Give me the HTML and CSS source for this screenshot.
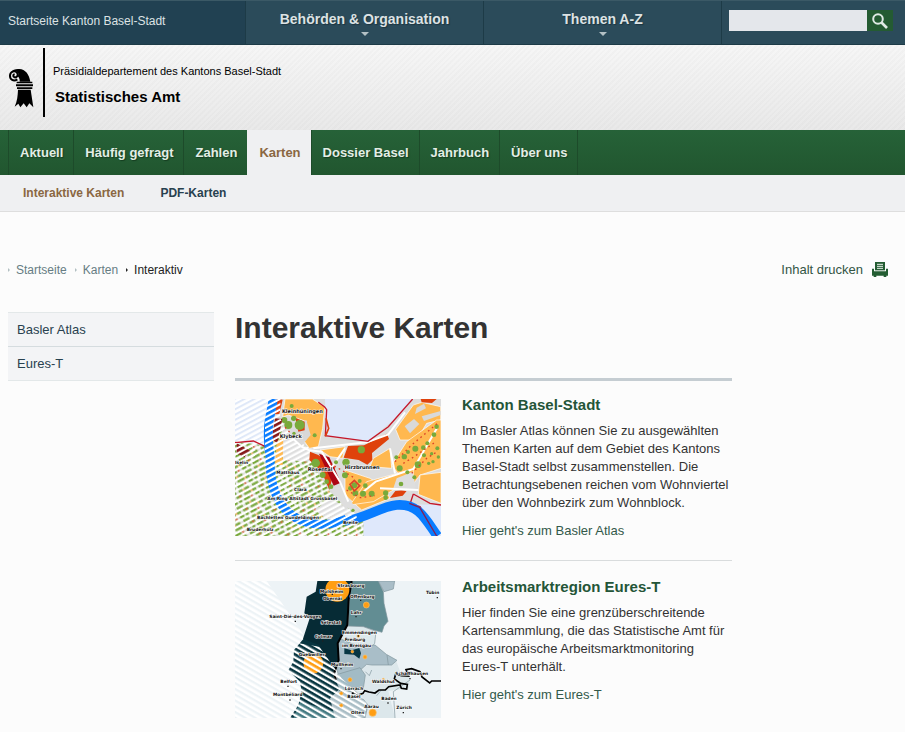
FILE: index.html
```html
<!DOCTYPE html>
<html lang="de">
<head>
<meta charset="utf-8">
<title>Interaktive Karten – Statistisches Amt</title>
<link rel="stylesheet" href="styles.css">
</head>
<body>
<div class="topbar">
  <a class="topbar-home" href="#">Startseite Kanton Basel-Stadt</a>
  <a class="topbar-menu" href="#">Behörden &amp; Organisation<span class="arrow"></span></a>
  <a class="topbar-menu" href="#">Themen A-Z<span class="arrow"></span></a>
  <form class="search">
    <input type="text" aria-label="Suche">
    <button type="button" aria-label="Suchen">
      <svg width="16" height="16" viewBox="0 0 16 16" fill="none" stroke="#dfe9e4"><circle cx="6" cy="6" r="4.8" stroke-width="2"/><path d="M9.5 9.5L15 15" stroke-width="2.6"/></svg>
    </button>
  </form>
</div>
<header class="brand">
  <svg class="logo" width="27" height="40" viewBox="0 0 81 120" aria-hidden="true">
    <path d="M35 41C36 33 32 27 29 25C35 15 27 8 18 9L8 12C15 4 24 2 34 3C52 4 63 18 67 41z" fill="#000"/>
    <path d="M28 34C17 42 5 34 6 22C7 11 20 6 27 14C33 22 25 31 18 27C14 24 16 19 20 20" fill="none" stroke="#000" stroke-width="6"/>
    <path d="M26 41H73V46H26zM24 49H75V55H24zM27 58H73V63H27z" fill="#000"/>
    <path d="M30 65H68L76 118L64 106L56 118L47 106L37 118L31 107L20 116C28 99 29 83 30 65z" fill="#000"/>
  </svg>
  <div class="brand-text">
    <div class="department">Präsidialdepartement des Kantons Basel-Stadt</div>
    <div class="office">Statistisches Amt</div>
  </div>
</header>
<nav class="mainnav">
  <a href="#">Aktuell</a><a href="#">Häufig gefragt</a><a href="#">Zahlen</a><a class="active" href="#">Karten</a><a href="#">Dossier Basel</a><a href="#">Jahrbuch</a><a href="#">Über uns</a>
</nav>
<nav class="subnav">
  <a class="active" href="#">Interaktive Karten</a><a href="#">PDF-Karten</a>
</nav>
<div class="pathbar">
  <nav class="crumbs"><a href="#">Startseite</a><a href="#">Karten</a><span>Interaktiv</span></nav>
  <a class="print" href="#">Inhalt drucken
    <svg width="16" height="15" viewBox="0 0 48 45"><path d="M9 0H39V25H9z" fill="#245d33"/><path d="M15 7H33M15 13H33M15 19H33" stroke="#e8f0ea" stroke-width="3"/><path d="M0 20H6V28H42V20H48V41H43V45H35V41H13V45H5V41H0z" fill="#245d33"/></svg>
  </a>
</div>
<div class="layout">
  <nav class="sidenav"><a href="#">Basler Atlas</a><a href="#">Eures-T</a></nav>
  <main>
    <h1>Interaktive Karten</h1>
    <article class="teaser">
      <svg class="map" viewBox="15 12 618 411" role="img" aria-label="Karte Kanton Basel-Stadt">
        <defs>
          <pattern id="sky" width="40" height="14" patternUnits="userSpaceOnUse" patternTransform="rotate(-28)"><rect width="40" height="14" fill="#fff"/><rect width="40" height="6" fill="#dfe8f8"/></pattern>
          <pattern id="town" width="74" height="42" patternUnits="userSpaceOnUse" patternTransform="rotate(-28)"><rect width="74" height="42" fill="#fff"/><path d="M0 3H74M0 17H74M0 31H74" stroke="#dedfdb" stroke-width="6"/><path d="M2 3h14M22 3h9M38 3h20M6 17h20M35 17h12M54 17h15M0 31h12M20 31h18M46 31h22" stroke="#78a83b" stroke-width="7"/><path d="M61 3h6M29 31h5" stroke="#d9562b" stroke-width="5"/><path d="M48 17h5M69 31h5" stroke="#f1b35c" stroke-width="6"/></pattern>
          <pattern id="plain" width="40" height="14" patternUnits="userSpaceOnUse" patternTransform="rotate(-28)"><rect width="40" height="14" fill="#fff"/><rect width="40" height="7" fill="#dedede"/></pattern>
          <pattern id="cut" width="40" height="14" patternUnits="userSpaceOnUse" patternTransform="rotate(-28)"><rect y="8" width="40" height="6" fill="#fff"/></pattern>
          <clipPath id="west"><path d="M0 0H152L150 70L190 130L250 190L300 290L355 340L392 375V440H0z"/></clipPath>
        </defs>
        <rect x="15" y="12" width="618" height="411" fill="#dfe8fb"/>
        <path d="M150 12H285L287 122L414 139L520 50L548 12H633V330L545 328L480 325L400 375V423H130V60z" fill="#dcdcdc"/>
        <path d="M15 12H140L110 150L15 145z" fill="url(#sky)"/>
        <path d="M15 140L110 152L150 75L190 130L238 160L245 205L300 290L355 340L400 375V423H15z" fill="url(#town)"/>
        <path d="M158 85L190 130L238 160L243 200L160 195L150 140zM300 310L355 340L390 375L300 380L255 345z" fill="url(#plain)"/>
        <g fill="#ffb84f" stroke="#fff" stroke-width="2">
          <path d="M165 12H247L284 36L278 100L265 155L238 160L220 135L230 80L175 60L158 66z"/>
          <path d="M270 165L345 155L338 190L300 185z"/><path d="M497 103L550 30L575 22L632 35V75L590 85L560 135L510 135z"/>
          <path d="M430 190L480 160L485 220L420 215z"/><path d="M485 210L530 140L620 75H633V220L570 240L540 280L500 230z"/>
          <path d="M345 225L420 250L460 275L480 310L395 345L345 300z"/><path d="M410 260L550 222V250L430 320L360 330z"/>
          <path d="M570 240L633 232V325L565 298z"/>
        </g>
        <path d="M140 145L160 120L158 210H135z" fill="#ffb84f"/>
        <g fill="#d9d9d9"><path d="M524 94L552 72L568 87L540 115z"/><path d="M575 64L632 48V60L582 78z"/><path d="M560 38L582 26L588 40L555 57z"/></g>
        <path d="M205 88L229 75L242 120L212 155L190 130z" fill="#d8d8d8"/>
        <path d="M140 12L158 14L148 57L135 58zM196 68L224 80V106L205 110z" fill="#dc3f10"/>
        <path d="M341 188L354 153L402 151L471 116L477 132L426 174L427 195L412 209L386 195z" fill="#df420c"/>
        <path d="M572 12H620L606 24L575 22zM240 170L265 180L315 216L298 285L275 230L238 195zM480 309L496 288L533 284L518 302z" fill="#df420c"/>
        <path d="M267 176L298 187L333 263L311 272z" fill="#ad0513"/>
        <path d="M300 282L330 275L375 335L345 340zM500 250L548 230L557 275L544 292L490 280z" fill="#dedede"/>
        <g fill="none" stroke="#fff" stroke-width="6"><path d="M190 132L215 155L238 166L275 170L330 260L355 320M250 160L410 142L475 118L525 52M400 290L437 260L550 222L625 92M345 160L300 225M450 280L565 285M480 160L495 235"/></g>
        <g fill="#79aa3b">
          <circle cx="209" cy="90" r="15"/><circle cx="175" cy="90" r="12"/><circle cx="163" cy="75" r="9"/><circle cx="191" cy="70" r="8"/><circle cx="257" cy="204" r="13"/><circle cx="394" cy="164" r="11"/><circle cx="254" cy="121" r="6"/><circle cx="348" cy="202" r="11"/><circle cx="345" cy="241" r="9"/><circle cx="278" cy="240" r="9"/><circle cx="290" cy="260" r="7"/><circle cx="303" cy="275" r="7"/><circle cx="373" cy="271" r="9"/><circle cx="376" cy="295" r="9"/><circle cx="399" cy="296" r="9"/><circle cx="425" cy="296" r="9"/><circle cx="361" cy="280" r="7"/><circle cx="406" cy="272" r="7"/><circle cx="389" cy="258" r="6"/><circle cx="467" cy="294" r="8"/><circle cx="467" cy="308" r="7"/><circle cx="513" cy="267" r="7"/><circle cx="564" cy="209" r="10"/><circle cx="556" cy="161" r="9"/><circle cx="509" cy="220" r="9"/><circle cx="499" cy="187" r="6"/><circle cx="523" cy="185" r="8"/><circle cx="534" cy="171" r="6"/><circle cx="580" cy="158" r="7"/><circle cx="592" cy="145" r="6"/><circle cx="612" cy="119" r="7"/><circle cx="620" cy="95" r="7"/><circle cx="582" cy="181" r="6"/><circle cx="596" cy="205" r="5"/><circle cx="609" cy="200" r="5"/><circle cx="605" cy="176" r="5"/><circle cx="622" cy="160" r="6"/><circle cx="532" cy="232" r="6"/><circle cx="553" cy="247" r="6"/><circle cx="625" cy="186" r="5"/><circle cx="185" cy="33" r="6"/><circle cx="192" cy="115" r="5"/><circle cx="369" cy="346" r="5"/><circle cx="318" cy="202" r="6"/>
        </g>
        <g fill="none" stroke="#dc4328" stroke-width="4" stroke-dasharray="5 10"><path d="M165 97L185 118M300 206L343 230L375 250M495 200L545 150L625 83M520 205L545 190L618 140M545 235L590 190L625 168M350 285L390 308L435 302"/></g>
        <path d="M360 268L373 256L389 272L373 288z" fill="none" stroke="#dc4328" stroke-width="5"/>
        <g fill="none" stroke="#c5172a" stroke-width="4"><path d="M265 22L284 36L290 44L286 122L414 139L475 95L548 12M15 143L70 138L105 154M550 297L540 327L570 335L610 400L622 423M550 297L600 325L633 330"/></g>
        <path d="M288 70L296 100L286 124" fill="none" stroke="#dc3f10" stroke-width="5"/>
        <path d="M135 70L157 72L142 145L125 132zM20 145L62 168L43 187L20 175z" fill="#851719"/>
        <path d="M130 12L118 75Q111 115 120 185C119 265 136 324 184 359C223 390 290 399 350 372" fill="none" stroke="#087cff" stroke-width="27"/>
        <path d="M345 378C405 372 450 335 500 330C565 325 585 370 622 423" fill="none" stroke="#087cff" stroke-width="29"/>
        <path d="M538 325L569 337L620 423" fill="none" stroke="#861e55" stroke-width="4"/>
        <g clip-path="url(#west)"><rect x="105" y="12" width="55" height="200" fill="url(#cut)"/><path d="M100 200H160L210 350L380 360V423H200L130 340z" fill="url(#cut)"/><path d="M15 145H75V200H15z" fill="url(#cut)"/></g>
        <g class="map-label map-label-large"><text x="156" y="55">Kleinhüningen</text><text x="149" y="130">Klybeck</text><text x="233" y="228">Rosental</text><text x="344" y="223">Hirzbrunnen</text></g>
        <g class="map-label"><text x="15" y="208">Iselin</text><text x="139" y="236">Matthäus</text><text x="192" y="289">Clara</text><text x="112" y="314">Am Ring Altstadt Grossbasel</text><text x="81" y="372">Bachletten Gundeldingen</text><text x="50" y="407">Bruderholz</text><text x="339" y="386">Breite</text></g>
      </svg>
      <div class="teaser-text">
        <h2>Kanton Basel-Stadt</h2>
        <p>Im Basler Atlas können Sie zu ausgewählten Themen Karten auf dem Gebiet des Kantons Basel-Stadt selbst zusammenstellen. Die Betrachtungsebenen reichen vom Wohnviertel über den Wohnbezirk zum Wohnblock.</p>
        <a href="#">Hier geht's zum Basler Atlas</a>
      </div>
    </article>
    <article class="teaser">
      <svg class="map" viewBox="15 18 618 411" role="img" aria-label="Karte Arbeitsmarktregion Eures-T">
        <defs>
          <pattern id="pale" width="40" height="15" patternUnits="userSpaceOnUse" patternTransform="rotate(30)"><rect y="7" width="40" height="8" fill="#fff"/></pattern>
          <pattern id="wide" width="40" height="15" patternUnits="userSpaceOnUse" patternTransform="rotate(30)"><rect y="8" width="40" height="7" fill="#fff"/></pattern>
        </defs>
        <rect x="15" y="18" width="618" height="411" fill="#edf3f6"/>
        <path d="M15 18H110L225 185L220 200L330 429H15z" fill="url(#pale)"/>
        <path d="M355 429L315 300L385 270L405 235L500 262L515 302L540 300L537 340L475 348L495 429z" fill="#dce7eb"/>
        <g stroke="#81969d" stroke-width="2">
          <path d="M365 18H445L460 50L462 85L474 139L462 153L456 172L430 165L400 155L355 154L358 80z" fill="#628d93"/>
          <path d="M445 18H494L490 42L462 50z" fill="#a9bdc7"/>
          <path d="M350 153L400 155L438 169L434 205L405 240L345 225L326 180z" fill="#dce8ec"/>
          <path d="M327 190L388 215L435 210L469 238L501 256L485 270H425L410 268L390 286L325 300L315 260z" fill="#a9bec8"/>
          <path d="M323 298L390 278L406 300L400 340L360 350L320 340z" fill="#a2bbc5"/>
          <path d="M360 365L400 373L414 390L405 429H350L335 385z" fill="#afc2ca"/>
          <path d="M406 290L418 302L425 285M454 345L440 362M471 240L475 270M540 315L490 350M490 350L495 429" fill="none"/>
        </g>
        <path d="M262 18H365L357 80L352 150L323 205L326 255L312 305L240 225L219 191L240 127L223 115L230 65L257 50z" fill="#062b35"/>
        <path d="M220 192L268 210L312 305L330 345L400 390L380 429H180L205 390L215 350L210 320L175 286L190 260L192 225z" fill="#073540"/>
        <path d="M210 380L315 410L320 429H190z" fill="#447a82"/>
        <path d="M325 345L410 385L390 429H315L300 370z" fill="#a9bdc5"/>
        <path d="M365 18L356 72L352 150L323 205L326 255L312 295L318 315" fill="none" stroke="#000" stroke-width="6"/>
        <path d="M365 355L377 352L385 360L399 355L404 347L417 351L435 354L447 345H466L476 335L510 330L514 340L530 342L532 328L512 325L493 312L497 297L514 302L536 303L528 284L545 281L570 290L576 306L599 324L605 318H633" fill="none" stroke="#000" stroke-width="5"/>
        <path d="M343 220L365 226L388 219L393 235L388 251L372 239L343 237z" fill="#073643"/>
        <circle cx="322" cy="44" r="36" fill="#ff9e13"/><circle cx="250" cy="265" r="30" fill="#ff9e13"/>
        <path d="M180 200L268 215L335 310L410 380L405 429H170L150 290z" fill="url(#wide)"/>
        <g fill="#ff9e13" stroke="#f9bf6a" stroke-width="2"><circle cx="409" cy="90" r="9"/><circle cx="405" cy="246" r="6"/><circle cx="360" cy="314" r="6"/><circle cx="428" cy="413" r="11"/><circle cx="367" cy="230" r="4"/><circle cx="334" cy="355" r="5"/><circle cx="334" cy="391" r="5"/><circle cx="385" cy="183" r="4"/><circle cx="460" cy="313" r="3"/></g>
        <g class="map-label"><text x="322" y="36">Strasbourg</text><text x="270" y="53">Molsheim</text><text x="278" y="76">Obernai</text><text x="360" y="68">Offenburg</text><text x="362" y="117">Lahr</text><text x="118" y="128">Saint-Dié-des-Vosges</text><text x="272" y="146">Sélestat</text><text x="254" y="188">Colmar</text><text x="336" y="177">Emmendingen</text><text x="344" y="199">Freiburg</text><text x="336" y="215">im Breisgau</text><text x="303" y="272">Müllheim</text><text x="206" y="243">Guebwiller</text><text x="151" y="324">Belfort</text><text x="129" y="363">Montbéliard</text><text x="344" y="345">Lörrach</text><text x="426" y="324">Waldshut</text><text x="496" y="301">Schaffhausen</text><text x="352" y="370">Basel</text><text x="454" y="374">Baden</text><text x="403" y="399">Aarau</text><text x="363" y="417">Olten</text><text x="499" y="403">Zürich</text><text x="588" y="58">Tübin</text></g>
        <path d="M305 58h4M304 84h4M390 76h4M376 125h4M194 139h4M300 152h4M276 198h4M331 281h4M383 183h4M538 311h4M472 384h4M518 413h4M172 334h4M178 375h4M620 68h4" stroke="#222" stroke-width="4"/>
      </svg>
      <div class="teaser-text">
        <h2>Arbeitsmarktregion Eures-T</h2>
        <p>Hier finden Sie eine grenzüberschreitende Kartensammlung, die das Statistische Amt für das europäische Arbeitsmarktmonitoring Eures-T unterhält.</p>
        <a href="#">Hier geht's zum Eures-T</a>
      </div>
    </article>
  </main>
</div>
</body>
</html>
```

FILE: styles.css
```css
* { box-sizing: border-box; }
body { margin: 0; background: #fcfcfc; color: #333; font-family: "Liberation Sans", Arial, sans-serif; font-size: 13px; line-height: 18px; }
a { color: inherit; text-decoration: none; }

.topbar { display: grid; grid-template-columns: 246px 238px 238px 1fr; height: 45px; background: #2b4b5a; border-top: 1px solid #3b5966; border-bottom: 1px solid #1d3b47; color: #dce2e4; }
.topbar-home { padding: 11px 8px; background: #214152; font-size: 12px; border-right: 1px solid #1d3b47; }
.topbar-menu { padding-top: 9px; text-align: center; font-size: 14px; font-weight: bold; text-shadow: 1px 1px 1px #1d3540; border-right: 1px solid #1d3b47; }
.arrow { display: block; width: 8px; margin: 4px auto 0; border: 4px solid transparent; border-top-color: #b4c1c5; border-bottom: 0; }
.search { display: flex; height: 30px; padding: 9px 12px 0 7px; }
.search input { flex: 1; min-width: 0; max-width: 138px; height: 21px; padding: 0 4px; border: 0; background: #e4e7eb; }
.search button { display: flex; align-items: center; justify-content: center; width: 26px; height: 21px; padding: 0; border: 0; background: #245b32; }

.brand { display: flex; height: 85px; padding: 3px 8px; color: #000; background: repeating-linear-gradient(135deg, transparent 0 2px, rgba(0, 0, 0, 0.015) 2px 4px), linear-gradient(#f6f6f6, #e9e9e9); }
.logo { margin: 20px 8px 0 0; }
.brand-text { height: 69px; padding: 14px 0 0 8px; border-left: 2px solid #000; }
.department { font-size: 11px; }
.office { padding: 8px 0 0 2px; font-size: 15px; font-weight: bold; }

.mainnav { display: flex; height: 45px; padding-left: 8px; background: linear-gradient(#266238, #21562f); color: #e3eee6; font-weight: bold; }
.mainnav a { padding: 14px 10px 0 11px; border-left: 1px solid #1d4b2a; text-shadow: 1px 1px 1px #153d20; }
.mainnav a:last-child { border-right: 1px solid #1d4b2a; }
.mainnav .active { border-color: #eff0f2; background: #eff0f2; color: #8a6742; text-shadow: none; }
.subnav { display: flex; gap: 36px; height: 37px; padding: 9px 23px; border-bottom: 1px solid #dedede; background: #eff0f2; color: #28414f; font-size: 12px; font-weight: bold; }
.subnav .active { color: #8a6742; }

.pathbar { display: flex; justify-content: space-between; padding: 48px 17px 0 8px; }
.crumbs { display: flex; gap: 8px; padding-top: 1px; color: #667d83; font-size: 12px; }
.crumbs > * { display: flex; align-items: center; gap: 6px; }
.crumbs > *::before { content: ""; border: 2px solid transparent; border-left-color: #b2bfc2; border-right: 0; }
.crumbs span { color: #222; }
.crumbs span::before { border-left-color: #222; }
.print { display: flex; align-items: center; gap: 9px; color: #335544; }

.layout { display: grid; grid-template-columns: 206px minmax(0, 497px); gap: 21px; padding: 33px 8px 0; }
.sidenav { align-self: start; border-top: 1px solid #e3e8e9; color: #28414f; }
.sidenav a { display: block; padding: 8px 9px 7px; border-bottom: 1px solid #d5dcdf; background: #f3f4f6; }
.sidenav a:last-child { border-color: #e3e8e9; }
h1 { margin: 0; padding-bottom: 34px; border-bottom: 3px solid #c5cdd2; color: #333; font-size: 30px; line-height: 32px; }
.teaser { display: grid; grid-template-columns: 206px 1fr; gap: 21px; padding: 18px 0 20px; }
.teaser + .teaser { padding: 20px 0 14px; border-top: 1px solid #d9dcdd; }
.map { display: block; width: 206px; height: 137px; }
.teaser-text { color: #333; }
.teaser-text h2 { margin: -3px 0 8px; color: #245538; font-size: 15px; line-height: 18px; }
.teaser-text p { margin: 0 0 10px; }
.teaser-text a { color: #33594a; }
.map-label { fill: #111; stroke: #fff; stroke-width: 3px; paint-order: stroke; font-family: "DejaVu Sans", sans-serif; font-size: 13px; font-weight: bold; }
.map-label-large { font-size: 15px; }
```
